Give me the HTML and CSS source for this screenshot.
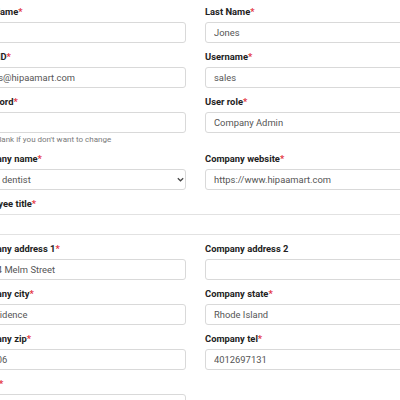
FILE: index.html
```html
<!DOCTYPE html>
<html>
<head>
<meta charset="utf-8">
<link rel="stylesheet" href="styles.css">
</head>
<body>
<form class="form">
  <div class="group">
    <label class="label">First Name<span class="req">*</span></label>
    <input class="field" type="text" value="">
  </div>
  <div class="group">
    <label class="label">Last Name<span class="req">*</span></label>
    <input class="field" type="text" value="Jones">
  </div>
  <div class="group">
    <label class="label">Email ID<span class="req">*</span></label>
    <input class="field" type="text" value="sales@hipaamart.com">
  </div>
  <div class="group">
    <label class="label">Username<span class="req">*</span></label>
    <input class="field" type="text" value="sales">
  </div>
  <div class="group">
    <label class="label">Password<span class="req">*</span></label>
    <input class="field" type="password" value="">
    <div class="help">Leave blank if you don't want to change</div>
  </div>
  <div class="group">
    <label class="label">User role<span class="req">*</span></label>
    <div class="select-wrap">
      <select class="field select"><option>Company Admin</option></select>
    </div>
  </div>
  <div class="group">
    <label class="label">Company name<span class="req">*</span></label>
    <div class="select-wrap">
      <select class="field select"><option>Best dentist</option></select>
      <svg class="chevron" width="7" height="5" viewBox="0 0 7 5"><path d="M0.8 1.2 L3.5 3.8 L6.2 1.2" fill="none" stroke="#444" stroke-width="1.2"/></svg>
    </div>
  </div>
  <div class="group">
    <label class="label">Company website<span class="req">*</span></label>
    <input class="field" type="text" value="https://www.hipaamart.com">
  </div>
  <div class="group full">
    <label class="label">Employee title<span class="req">*</span></label>
    <input class="field light" type="text" value="">
  </div>
  <div class="group">
    <label class="label">Company address 1<span class="req">*</span></label>
    <input class="field" type="text" value="1234 Melm Street">
  </div>
  <div class="group">
    <label class="label">Company address 2</label>
    <input class="field" type="text" value="">
  </div>
  <div class="group">
    <label class="label">Company city<span class="req">*</span></label>
    <input class="field" type="text" value="Providence">
  </div>
  <div class="group">
    <label class="label">Company state<span class="req">*</span></label>
    <input class="field" type="text" value="Rhode Island">
  </div>
  <div class="group">
    <label class="label">Company zip<span class="req">*</span></label>
    <input class="field" type="text" value="02906">
  </div>
  <div class="group">
    <label class="label">Company tel<span class="req">*</span></label>
    <input class="field" type="text" value="4012697131">
  </div>
  <div class="group">
    <label class="label">Phone<span class="req">*</span></label>
    <input class="field" type="text" value="">
  </div>
</form>
</body>
</html>
```

FILE: styles.css
```css
html, body {
  margin: 0;
  padding: 0;
  background: #fff;
  overflow: hidden;
}
body {
  font-family: Roboto, "Liberation Sans", sans-serif;
}
.form {
  display: grid;
  grid-template-columns: 214px 214px;
  column-gap: 19px;
  margin-left: -28px;
  padding-top: 5px;
  width: 447px;
}
.group {
  display: flex;
  flex-direction: column;
  margin-bottom: 7px;
}
.full {
  grid-column: 1 / span 2;
}
.label {
  font-size: 9.4px;
  font-weight: 700;
  line-height: 14px;
  color: #222;
  margin-bottom: 3px;
}
.req {
  color: #e3343f;
}
.field {
  box-sizing: border-box;
  display: block;
  height: 21px;
  width: 100%;
  border: 1px solid #d9d9d9;
  border-radius: 3px;
  padding: 0 8px;
  font-family: Roboto, "Liberation Sans", sans-serif;
  font-size: 9.4px;
  color: #555;
  background: #fff;
  margin: 0;
  outline: none;
}
.light {
  border-color: #e2e2e2;
}
.select-wrap {
  position: relative;
}
.select {
  -webkit-appearance: none;
  appearance: none;
  padding: 0 8px;
}
.chevron {
  position: absolute;
  right: 2px;
  top: 8px;
}
.help {
  font-size: 8px;
  line-height: 11px;
  color: #7a7a7a;
  margin-top: 1px;
}
```
